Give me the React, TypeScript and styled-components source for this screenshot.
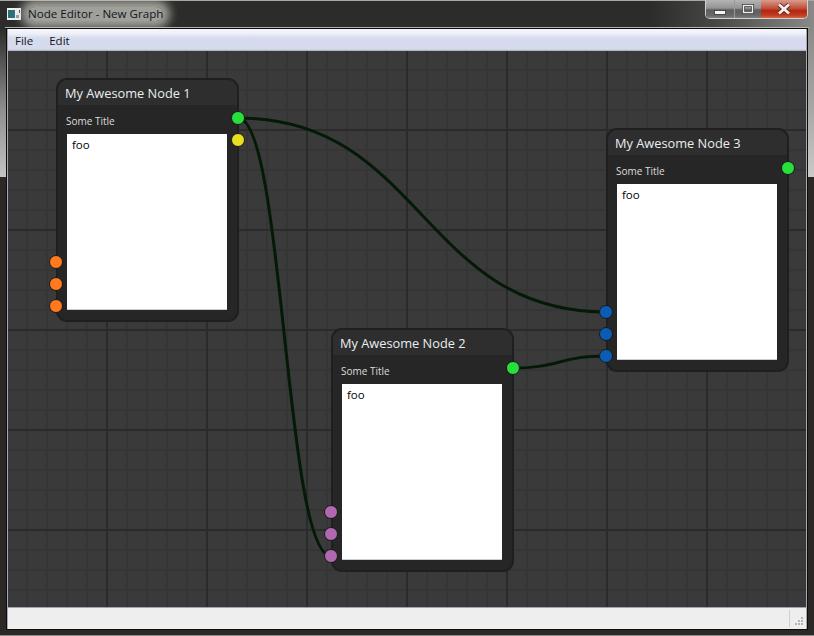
import { createGlobalStyle, styled } from "styled-components";

const GlobalStyle = createGlobalStyle`
  html, body {
    margin: 0;
    padding: 0;
    background: #2b2826;
  }
`;

const Frame = styled.div`
  position: relative;
  width: 814px;
  height: 636px;
  box-sizing: border-box;
  padding: 0 6px 6px;
  display: flex;
  flex-direction: column;
  overflow: hidden;
  font-family: "Open Sans", "Noto Sans", sans-serif;
  background:
    linear-gradient(#a8a8a4, #a8a8a4) top / 100% 1px no-repeat,
    linear-gradient(#8c8c8c, #8c8c8c) bottom / 100% 1px no-repeat,
    linear-gradient(90deg, #2c2c2a 0, #2c2c2a 80%, #474745 88%, #8a8a88 100%) top / 100% 28px no-repeat,
    linear-gradient(180deg, #2c2c2a 28px, #8f8f8d 110px, #c4c4c2 177px) left top / 6px 177px no-repeat,
    linear-gradient(180deg, #8a8a88 28px, #a8a8a6 110px, #cacac8 177px) right top / 6px 177px no-repeat,
    #2b2826;
`;

const TitleBar = styled.div`
  height: 28px;
  flex: none;
  box-sizing: border-box;
  display: flex;
  align-items: center;
  gap: 7px;
  padding-left: 2px;
  border-bottom: 1px solid #b4b4b0;
  margin: 0 -1px;
`;

const AppIcon = styled.svg`
  width: 14px;
  height: 12px;
  flex: none;
`;

const WindowTitle = styled.span`
  font-size: 11.6px;
  color: #10171c;
  background: rgba(205, 205, 200, 0.72);
  box-shadow: 0 0 10px 7px rgba(205, 205, 200, 0.72);
  border-radius: 8px;
  line-height: 14px;
`;

const WindowButtons = styled.div`
  position: absolute;
  top: 0;
  right: 6px;
  display: flex;
  height: 18px;
  border: 1px solid #d0d0d0;
  border-top: none;
  border-radius: 0 0 5px 5px;
  overflow: hidden;
`;

const WindowButton = styled.div<{ $width: number; $close?: boolean }>`
  width: ${(p) => p.$width}px;
  display: flex;
  align-items: center;
  justify-content: center;
  border-left: ${(p) => (p.$close ? "none" : "1px solid #9a9a9a")};
  background: ${(p) =>
    p.$close
      ? "linear-gradient(180deg, #d89c90 0, #c4503a 45%, #b0280f 60%, #c23c22 85%, #d8664c 100%)"
      : "linear-gradient(180deg, #b4b4b4 0, #949494 45%, #5c5e60 55%, #66686a 85%, #7c7e80 100%)"};
  &:first-child {
    border-left: none;
  }
`;

const ButtonGlyph = styled.svg`
  display: block;
`;

const Client = styled.div`
  flex: 1;
  min-height: 0;
  display: flex;
  border: 1px solid #0c0c0c;
`;

const ClientInner = styled.div`
  flex: 1;
  min-width: 0;
  display: flex;
  flex-direction: column;
  border-left: 1px solid #a6aab4;
  border-right: 1px solid #a6aab4;
`;

const MenuBar = styled.div`
  height: 22px;
  flex: none;
  box-sizing: border-box;
  display: flex;
  align-items: center;
  gap: 16px;
  padding-left: 7px;
  font-size: 11.5px;
  color: #10141c;
  background: linear-gradient(180deg, #f6f7fb 0, #eceff7 22%, #d6dcef 40%, #d5daec 92%, #a4a9b4 100%);
`;

const Canvas = styled.div`
  position: relative;
  flex: 1;
  overflow: hidden;
  background-color: #3a3a3a;
  background-image:
    linear-gradient(90deg, #2b2b2b 2px, transparent 2px),
    linear-gradient(180deg, #2b2b2b 2px, transparent 2px),
    linear-gradient(90deg, #353535 2px, transparent 2px),
    linear-gradient(180deg, #353535 2px, transparent 2px);
  background-size: 100px 100px, 100px 100px, 20px 20px, 20px 20px;
  background-position: 98px 0, 0 78px, 18px 0, 0 18px;
`;

const Edges = styled.svg`
  position: absolute;
  inset: 0;
  width: 100%;
  height: 100%;
  pointer-events: none;
  z-index: 0;
`;

const NodeCard = styled.div<{ $x: number; $y: number }>`
  position: absolute;
  left: ${(p) => p.$x}px;
  top: ${(p) => p.$y}px;
  width: 183px;
  height: 244px;
  box-sizing: border-box;
  display: flex;
  flex-direction: column;
  background: #262626;
  border: 2px solid #1f1f1f;
  border-radius: 11px;
  z-index: 1;
`;

const NodeHeader = styled.div`
  height: 25px;
  flex: none;
  padding-left: 7px;
  display: flex;
  align-items: center;
  font-size: 12.8px;
  color: #e8eef2;
  background: #2e2e2e;
  border-radius: 9px 9px 0 0;
`;

const NodeBody = styled.div`
  flex: 1;
  display: flex;
  flex-direction: column;
  padding: 8px 10px 10px 9px;
  min-height: 0;
`;

const FieldLabel = styled.div`
  height: 21px;
  flex: none;
  margin-left: -1px;
  font-size: 10px;
  line-height: 17px;
  color: #dcdcdc;
`;

const FieldBox = styled.div`
  flex: 1;
  background: #fff;
  border-bottom: 1px solid #c8cdd8;
  padding: 3px 5px;
  font-size: 11.5px;
  line-height: 15px;
  color: #000;
`;

const Pin = styled.div<{ $color: string; $side: "left" | "right"; $y: number }>`
  position: absolute;
  ${(p) => (p.$side === "left" ? "left: -9px;" : "right: -8px;")}
  top: ${(p) => p.$y}px;
  width: 12px;
  height: 12px;
  box-sizing: content-box;
  border-radius: 50%;
  background: ${(p) => p.$color};
  border: 1px solid #191919;
`;

const StatusBar = styled.div`
  position: relative;
  height: 21px;
  flex: none;
  background: #eeeeee;
  border-top: 1px solid #9ea4b4;
`;

const StatusDivider = styled.div`
  position: absolute;
  right: 16px;
  top: 2px;
  bottom: 2px;
  width: 1px;
  background: #cfcfcf;
`;

const SizeGrip = styled.svg`
  position: absolute;
  right: 2px;
  bottom: 2px;
  width: 10px;
  height: 10px;
`;

interface PinInfo {
  color: string;
  side: "left" | "right";
  y: number;
}

interface NodeInfo {
  title: string;
  x: number;
  y: number;
  pins: PinInfo[];
}

const ORANGE = "#ff7a1c";
const PURPLE = "#b068b0";
const BLUE = "#0a5cb4";
const GREEN = "#28e03c";
const YELLOW = "#e6e01e";

const nodes: NodeInfo[] = [
  {
    title: "My Awesome Node 1",
    x: 48,
    y: 27,
    pins: [
      { color: GREEN, side: "right", y: 31 },
      { color: YELLOW, side: "right", y: 53 },
      { color: ORANGE, side: "left", y: 175 },
      { color: ORANGE, side: "left", y: 197 },
      { color: ORANGE, side: "left", y: 219 },
    ],
  },
  {
    title: "My Awesome Node 2",
    x: 323,
    y: 277,
    pins: [
      { color: GREEN, side: "right", y: 31 },
      { color: PURPLE, side: "left", y: 175 },
      { color: PURPLE, side: "left", y: 197 },
      { color: PURPLE, side: "left", y: 219 },
    ],
  },
  {
    title: "My Awesome Node 3",
    x: 598,
    y: 77,
    pins: [
      { color: GREEN, side: "right", y: 31 },
      { color: BLUE, side: "left", y: 175 },
      { color: BLUE, side: "left", y: 197 },
      { color: BLUE, side: "left", y: 219 },
    ],
  },
];

// canvas origin is at (8, 51) in the window
const edgePaths = [
  "M230 67 C 414 67, 414 261, 598 261",
  "M230 67 C 276 67, 277 505, 323 505",
  "M505 317 C 551 317, 552 305, 598 305",
];

function GraphNode(props: { node: NodeInfo }): React.JSX.Element {
  const { node } = props;

  return (
    <NodeCard $x={node.x} $y={node.y}>
      <NodeHeader>{node.title}</NodeHeader>
      <NodeBody>
        <FieldLabel>Some Title</FieldLabel>
        <FieldBox>foo</FieldBox>
      </NodeBody>
      {node.pins.map((pin, index) => (
        <Pin key={index} $color={pin.color} $side={pin.side} $y={pin.y} />
      ))}
    </NodeCard>
  );
}

export default function App(): React.JSX.Element {
  return (
    <Frame>
      <GlobalStyle />
      <TitleBar>
        <AppIcon viewBox="0 0 14 12">
          <rect width="14" height="12" fill="#eef0f2" />
          <rect x="1" y="2" width="7" height="8" fill="#2c6f78" />
          <rect x="9" y="7" width="3" height="3" fill="#8d989c" />
          <rect x="12" y="2" width="1" height="3" fill="#3a3f42" />
        </AppIcon>
        <WindowTitle>Node Editor - New Graph</WindowTitle>
      </TitleBar>
      <WindowButtons>
        <WindowButton $width={28}>
          <ButtonGlyph width="12" height="12" viewBox="0 0 12 12">
            <rect x="0.5" y="7.5" width="11" height="4" fill="#f4f4f4" stroke="#4a4a4a" />
          </ButtonGlyph>
        </WindowButton>
        <WindowButton $width={26}>
          <ButtonGlyph width="12" height="10" viewBox="0 0 12 10">
            <rect x="1.5" y="1.5" width="9" height="7" fill="none" stroke="#3c3c3c" strokeWidth="3" />
            <rect x="1.5" y="1.5" width="9" height="7" fill="none" stroke="#f0f0f0" strokeWidth="1.4" />
          </ButtonGlyph>
        </WindowButton>
        <WindowButton $width={46} $close>
          <ButtonGlyph width="14" height="12" viewBox="0 0 14 12">
            <path d="M2 1.5 L12 10.5 M12 1.5 L2 10.5" stroke="#5a2a22" strokeWidth="4.4" />
            <path d="M2 1.5 L12 10.5 M12 1.5 L2 10.5" stroke="#f4f0ee" strokeWidth="2.8" />
          </ButtonGlyph>
        </WindowButton>
      </WindowButtons>
      <Client>
        <ClientInner>
          <MenuBar>
            <span>File</span>
            <span>Edit</span>
          </MenuBar>
          <Canvas>
            <Edges>
              {edgePaths.map((d) => (
                <path key={d} d={d} fill="none" stroke="#041a06" strokeWidth={3} />
              ))}
            </Edges>
            {nodes.map((node) => (
              <GraphNode key={node.title} node={node} />
            ))}
          </Canvas>
          <StatusBar>
            <StatusDivider />
            <SizeGrip viewBox="0 0 10 10">
              <g fill="#b4b4b4">
                <rect x="7" y="0" width="2" height="2" />
                <rect x="4" y="3" width="2" height="2" />
                <rect x="7" y="3" width="2" height="2" />
                <rect x="1" y="6" width="2" height="2" />
                <rect x="4" y="6" width="2" height="2" />
                <rect x="7" y="6" width="2" height="2" />
              </g>
            </SizeGrip>
          </StatusBar>
        </ClientInner>
      </Client>
    </Frame>
  );
}
